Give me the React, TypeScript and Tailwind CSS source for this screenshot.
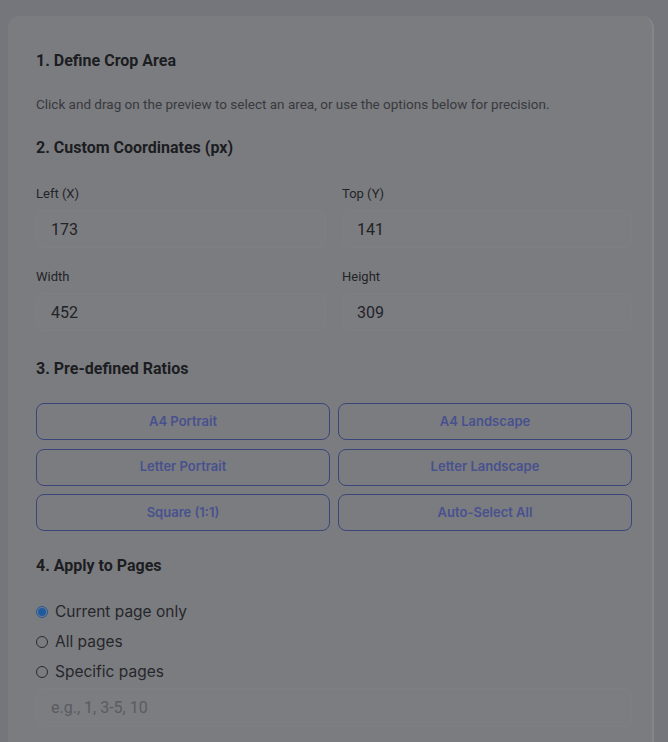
import { useState } from "react";

const RATIOS = [
  "A4 Portrait",
  "A4 Landscape",
  "Letter Portrait",
  "Letter Landscape",
  "Square (1:1)",
  "Auto-Select All",
];

const PAGE_OPTIONS = [
  { id: "current", label: "Current page only" },
  { id: "all", label: "All pages" },
  { id: "specific", label: "Specific pages" },
];

function Field({ label, value }: { label: string; value: string }) {
  return (
    <div className="flex flex-col">
      <label className="text-[13px] leading-5 text-[#232428]">{label}</label>
      <input
        defaultValue={value}
        className="mt-[6px] h-[38px] w-full rounded-md border border-[#7e7f82] bg-[#7c7d80] px-[14px] text-[16px] text-[#222327] outline-none"
      />
    </div>
  );
}

export default function App() {
  const [scope, setScope] = useState("current");

  return (
    <div
      className="min-h-[742px] w-[668px] overflow-hidden bg-[#74767c] pl-2 pt-4"
      style={{ fontFamily: "Roboto, 'Liberation Sans', sans-serif" }}
    >
      <div className="h-[726px] w-[646px] rounded-t-xl border-r-2 border-[#84858a] bg-[#7b7c80] pl-7 pr-[20px] pt-[33px]">
        {/* 1 */}
        <h2 className="text-base leading-6 font-bold text-[#1c1d21]">
          1. Define Crop Area
        </h2>
        <p className="mt-[21px] text-[13.5px] leading-5 text-[#38393d]">
          Click and drag on the preview to select an area, or use the options
          below for precision.
        </p>

        {/* 2 */}
        <h2 className="mt-[22px] text-base leading-6 font-bold text-[#1c1d21]">
          2. Custom Coordinates (px)
        </h2>
        <div className="mt-6 grid grid-cols-2 gap-x-4 gap-y-[19px]">
          <Field label="Left (X)" value="173" />
          <Field label="Top (Y)" value="141" />
          <Field label="Width" value="452" />
          <Field label="Height" value="309" />
        </div>

        {/* 3 */}
        <h2 className="mt-[26px] text-base leading-6 font-bold text-[#1c1d21]">
          3. Pre-defined Ratios
        </h2>
        <div
          className="mt-[22px] grid grid-cols-2 gap-x-2 gap-y-[8.5px]"
          style={{ fontFamily: "Inter, 'Liberation Sans', sans-serif" }}
        >
          {RATIOS.map((r) => (
            <button
              key={r}
              className="h-[37px] rounded-lg border border-[#3b457a] text-[13px] font-semibold text-[#48518e]"
            >
              {r}
            </button>
          ))}
        </div>

        {/* 4 */}
        <h2 className="mt-[23px] text-base leading-6 font-bold text-[#1c1d21]">
          4. Apply to Pages
        </h2>
        <div
          className="mt-[22px] flex flex-col gap-[6px]"
          style={{ fontFamily: "Inter, 'Liberation Sans', sans-serif" }}
        >
          {PAGE_OPTIONS.map((o) => (
            <label
              key={o.id}
              className="flex h-6 items-center gap-[7px] text-[15.5px] text-[#26272b]"
            >
              <span
                onClick={() => setScope(o.id)}
                className={
                  scope === o.id
                    ? "flex h-3 w-3 items-center justify-center rounded-full border border-[#1f5aa0]"
                    : "h-3 w-3 rounded-full border border-[#2b2c30]"
                }
              >
                {scope === o.id && (
                  <span className="h-[8px] w-[8px] rounded-full bg-[#1f5aa0]" />
                )}
              </span>
              {o.label}
            </label>
          ))}
        </div>
        <input
          placeholder="e.g., 1, 3-5, 10"
          className="mt-[4px] h-[39px] w-full rounded-md border border-[#7e7f82] bg-[#7c7d80] px-[14px] text-[16px] text-[#222327] outline-none placeholder:text-[#5a5b5f]"
        />
      </div>
    </div>
  );
}
